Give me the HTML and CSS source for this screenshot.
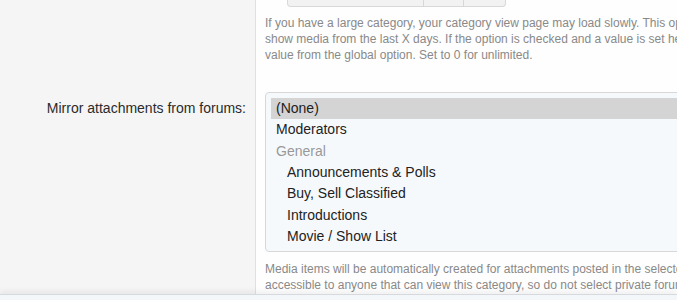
FILE: index.html
```html
<!DOCTYPE html>
<html lang="en">
<head>
<meta charset="UTF-8">
<meta name="viewport" content="width=device-width, initial-scale=1.0">
<title>Category options</title>
<link rel="stylesheet" href="styles.css">
</head>
<body>
<div class="page">
    <div class="form_row first">
        <div class="form_label"></div>
        <div class="form_value">
            <div class="number_box">
                <span class="number_input"></span>
                <span class="number_btn"></span>
                <span class="number_btn"></span>
            </div>
            <p class="hint">If you have a large category, your category view page may load slowly. This option allows you to only<br>show media from the last X days. If the option is checked and a value is set here, it will override the<br>value from the global option. Set to 0 for unlimited.</p>
        </div>
    </div>
    <div class="form_row grow">
        <div class="form_label"><label>Mirror attachments from forums:</label></div>
        <div class="form_value">
            <ul class="select_list">
                <li class="selected">(None)</li>
                <li>Moderators</li>
                <li class="group">General</li>
                <li class="sub">Announcements &amp; Polls</li>
                <li class="sub">Buy, Sell Classified</li>
                <li class="sub">Introductions</li>
                <li class="sub">Movie / Show List</li>
            </ul>
            <p class="hint">Media items will be automatically created for attachments posted in the selected forums. These will be<br>accessible to anyone that can view this category, so do not select private forums.</p>
        </div>
    </div>
    <div class="footer_bar"></div>
</div>
</body>
</html>
```

FILE: styles.css
```css
*{margin:0;padding:0;box-sizing:border-box}
html,body{height:100%;overflow:hidden}
body{background:#fefefe;font-family:"Liberation Sans",Arial,sans-serif;color:#222}
ul,li{list-style:none}

.page {display: flex; flex-direction: column; height: 300px;}
.form_row {display: grid; grid-template-columns: 256px 1fr;}
.form_row.grow {flex: 1; min-height: 0;}
.form_label {background-color: #f5f5f5; border-right: 1px solid #e0e0e0; text-align: right; padding-right: 9px;}
.form_label label {display: block; font-size: 14px; line-height: 21.33px; color: #2b2b2b; padding-top: 18px;}
.form_value {padding-left: 9px; overflow: hidden;}
.first .form_value {padding-bottom: 17px;}
.grow .form_value {padding-top: 12px;}

.number_box {display: flex; margin-left: 22px; width: 219px; height: 7px;}
.number_box span {background-color: #f2f2f2; border: 1px solid #d8d8d8; border-top: 0;}
.number_input {width: 137px; border-radius: 0 0 0 4px;}
.number_btn {width: 40px; border-left: 0 !important;}
.number_btn:last-child {width: 42px; border-radius: 0 0 4px 0;}

.hint {font-size: 12px; line-height: 16px; color: #898989; white-space: nowrap; margin-top: 8px;}
.grow .hint {margin-top: 9px;}

.select_list {width: 640px; background-color: #f6f9fc; border: 1px solid #d8d8d8; border-radius: 4px; padding: 5px 0 4px 5px;}
.select_list li {height: 21.33px; line-height: 21.33px; font-size: 14px; padding-left: 5px; color: #222; white-space: nowrap;}
.select_list li.selected {background-color: #d4d4d4;}
.select_list li.group {color: #999;}
.select_list li.sub {padding-left: 16px;}

.footer_bar {height: 6px; flex: none; background-color: #f3f7fa; border-top: 1px solid #d6dadf; box-shadow: 0 -3px 5px rgba(0,0,0,.06);}
```
